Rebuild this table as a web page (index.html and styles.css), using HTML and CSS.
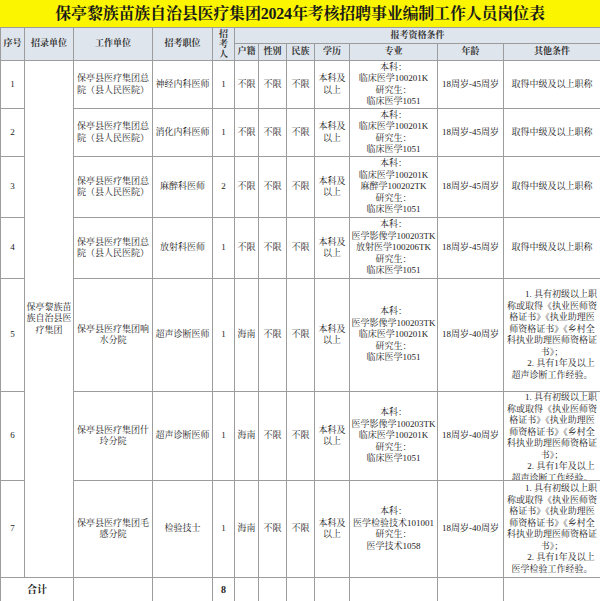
FILE: index.html
```html
<!DOCTYPE html>
<html lang="zh-CN">
<head>
<meta charset="utf-8">
<title>岗位表</title>
<link rel="stylesheet" href="styles.css">
</head>
<body>
<div class="title">保亭黎族苗族自治县医疗集团2024年考核招聘事业编制工作人员岗位表</div>
<table class="sheet">
  <colgroup>
    <col class="w24"><col class="w49"><col class="w79"><col class="w60"><col class="w22"><col class="w24"><col class="w28"><col class="w28"><col class="w35"><col class="w88"><col class="w66"><col class="w97">
  </colgroup>
  <thead>
    <tr class="h16">
      <th rowspan="2">序号</th>
      <th rowspan="2">招录单位</th>
      <th rowspan="2">工作单位</th>
      <th rowspan="2">招考职位</th>
      <th rowspan="2" class="vert">招<br>考<br>人</th>
      <th colspan="7">报考资格条件</th>
    </tr>
    <tr class="h17">
      <th>户籍</th><th>性别</th><th>民族</th><th>学历</th><th>专业</th><th>年龄</th><th>其他条件</th>
    </tr>
  </thead>
  <tbody>
    <tr class="h48">
      <td>1</td>
      <td rowspan="7" class="unit">保亭黎族苗<br>族自治县医<br>疗集团</td>
      <td>保亭县医疗集团总<br>院（县人民医院）</td>
      <td>神经内科医师</td>
      <td>1</td><td>不限</td><td>不限</td><td>不限</td>
      <td>本科及<br>以上</td>
      <td class="nw">本科：<br>临床医学100201K<br>研究生：<br>临床医学1051</td>
      <td>18周岁-45周岁</td>
      <td>取得中级及以上职称</td>
    </tr>
    <tr class="h48">
      <td>2</td>
      <td>保亭县医疗集团总<br>院（县人民医院）</td>
      <td>消化内科医师</td>
      <td>1</td><td>不限</td><td>不限</td><td>不限</td>
      <td>本科及<br>以上</td>
      <td class="nw">本科：<br>临床医学100201K<br>研究生：<br>临床医学1051</td>
      <td>18周岁-45周岁</td>
      <td>取得中级及以上职称</td>
    </tr>
    <tr class="h61">
      <td>3</td>
      <td>保亭县医疗集团总<br>院（县人民医院）</td>
      <td>麻醉科医师</td>
      <td>2</td><td>不限</td><td>不限</td><td>不限</td>
      <td>本科及<br>以上</td>
      <td class="nw">本科：<br>临床医学100201K<br>麻醉学100202TK<br>研究生：<br>临床医学1051</td>
      <td>18周岁-45周岁</td>
      <td>取得中级及以上职称</td>
    </tr>
    <tr class="h61">
      <td>4</td>
      <td>保亭县医疗集团总<br>院（县人民医院）</td>
      <td>放射科医师</td>
      <td>1</td><td>不限</td><td>不限</td><td>不限</td>
      <td>本科及<br>以上</td>
      <td class="nw">本科：<br>医学影像学100203TK<br>放射医学100206TK<br>研究生：<br>临床医学1051</td>
      <td>18周岁-45周岁</td>
      <td>取得中级及以上职称</td>
    </tr>
    <tr class="h113">
      <td>5</td>
      <td>保亭县医疗集团响<br>水分院</td>
      <td>超声诊断医师</td>
      <td>1</td><td>海南</td><td>不限</td><td>不限</td>
      <td>本科及<br>以上</td>
      <td class="nw">本科：<br>医学影像学100203TK<br>临床医学100201K<br>研究生：<br>临床医学1051</td>
      <td>18周岁-40周岁</td>
      <td class="other">
        <p class="para">1. 具有初级以上职<br>称或取得《执业医师资<br>格证书》《执业助理医<br>师资格证书》《乡村全<br>科执业助理医师资格证<br>书》；</p>
        <p class="para">2. 具有1年及以上<br>超声诊断工作经验。</p>
      </td>
    </tr>
    <tr class="h89">
      <td>6</td>
      <td>保亭县医疗集团什<br>玲分院</td>
      <td>超声诊断医师</td>
      <td>1</td><td>海南</td><td>不限</td><td>不限</td>
      <td>本科及<br>以上</td>
      <td class="nw">本科：<br>医学影像学100203TK<br>临床医学100201K<br>研究生：<br>临床医学1051</td>
      <td>18周岁-40周岁</td>
      <td class="other top">
        <div class="clip">
          <p class="para">1. 具有初级以上职<br>称或取得《执业医师资<br>格证书》《执业助理医<br>师资格证书》《乡村全<br>科执业助理医师资格证<br>书》；</p>
          <p class="para">2. 具有1年及以上<br>超声诊断工作经验。</p>
        </div>
      </td>
    </tr>
    <tr class="h97">
      <td>7</td>
      <td>保亭县医疗集团毛<br>感分院</td>
      <td>检验技士</td>
      <td>1</td><td>海南</td><td>不限</td><td>不限</td>
      <td>本科及<br>以上</td>
      <td class="nw">本科：<br>医学检验技术101001<br>研究生：<br>医学技术1058</td>
      <td>18周岁-40周岁</td>
      <td class="other">
        <p class="para">1. 具有初级以上职<br>称或取得《执业医师资<br>格证书》《执业助理医<br>师资格证书》《乡村全<br>科执业助理医师资格证<br>书》；</p>
        <p class="para">2. 具有1年及以上<br>医学检验工作经验。</p>
      </td>
    </tr>
    <tr class="h24 total">
      <td colspan="2">合计</td>
      <td></td><td></td>
      <td>8</td>
      <td></td><td></td><td></td><td></td><td></td><td></td><td></td>
    </tr>
  </tbody>
</table>
</body>
</html>
```
FILE: styles.css
```css
html, body {
  margin: 0;
  padding: 0;
  background: #ffffff;
}
body {
  width: 600px;
  font-family: "Liberation Serif", "Noto Serif CJK SC", "Noto Sans CJK SC", serif;
  color: #222;
}
.title {
  height: 27px;
  background: #fbf600;
  font-size: 16px;
  line-height: 28px;
  font-weight: bold;
  text-align: center;
  color: #1a1a1a;
  letter-spacing: -0.2px;
}
.sheet {
  width: 600px;
  border-collapse: collapse;
  table-layout: fixed;
}
.w24 { width: 24px; }
.w49 { width: 49px; }
.w79 { width: 79px; }
.w60 { width: 60px; }
.w22 { width: 22px; }
.w28 { width: 28px; }
.w35 { width: 35px; }
.w88 { width: 88px; }
.w66 { width: 66px; }
.w97 { width: 97px; }
.sheet th,
.sheet td {
  border: 1px solid #9c9c9c;
  padding: 0 1px;
  font-size: 9px;
  line-height: 11.5px;
  text-align: center;
  vertical-align: middle;
  overflow: hidden;
  font-weight: normal;
}
.sheet th {
  background: #dfe5ec;
  font-weight: bold;
  color: #333;
}
.sheet th.vert {
  line-height: 10px;
}
.h16 { height: 16px; }
.h17 { height: 17px; }
.h24 { height: 24px; }
.h48 { height: 48px; }
.h61 { height: 61px; }
.h89 { height: 89px; }
.h97 { height: 97px; }
.h113 { height: 113px; }
.nw { white-space: nowrap; }
.unit { line-height: 12px; }
.other {
  text-align: left;
  padding: 0 1px 0 2px;
  line-height: 11.4px;
}
.other.top { vertical-align: top; }
.para {
  margin: 0;
  text-indent: 2em;
  white-space: nowrap;
}
.clip {
  height: 88px;
  overflow: hidden;
}
.total td {
  font-weight: bold;
  font-size: 10px;
}
```
